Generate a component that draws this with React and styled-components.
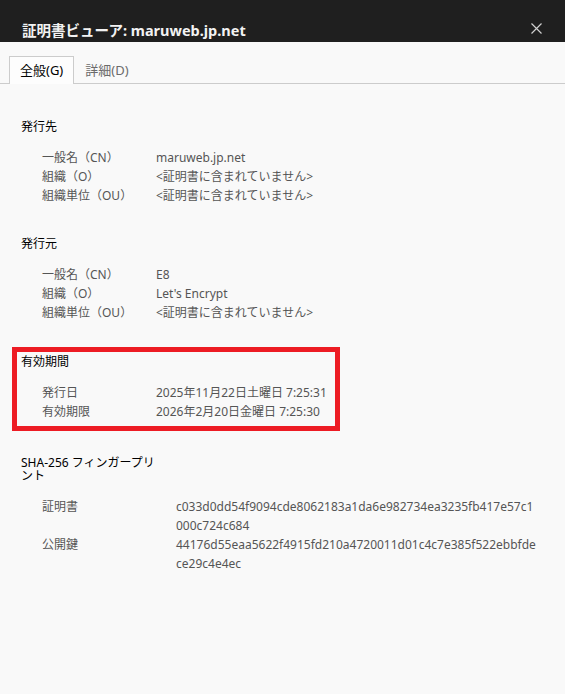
import React from "react";
import styled, { createGlobalStyle } from "styled-components";

const GlobalStyle = createGlobalStyle`
  body {
    margin: 0;
    background: #f9f9f9;
    font-family: "Noto Sans", "Noto Sans CJK JP", sans-serif;
  }
`;

const Window = styled.div`
  width: 565px;
  height: 694px;
  display: flex;
  flex-direction: column;
  background: #f9f9f9;
  overflow: hidden;
`;

const TitleBar = styled.div`
  height: 42px;
  box-sizing: border-box;
  background: #1f1f1f;
  display: flex;
  align-items: flex-end;
  justify-content: space-between;
  padding: 0 23px 1px 22px;
`;

const Title = styled.div`
  color: #f2f2f2;
  font-size: 14.5px;
  font-weight: 700;
  line-height: 22px;
`;

const CloseButton = styled.button`
  background: none;
  border: none;
  padding: 0;
  width: 12px;
  height: 12px;
  margin-bottom: 7px;
  display: flex;
  align-items: center;
  justify-content: center;
  cursor: pointer;
`;

const TabStrip = styled.div`
  display: flex;
  margin-top: 14px;
  padding-left: 9px;
  border-bottom: 1px solid #cccccc;
`;

const Tab = styled.div`
  height: 28px;
  box-sizing: border-box;
  padding: 0 10px 3px;
  display: flex;
  align-items: center;
  font-size: 13px;
  margin-bottom: -1px;
  border: 1px solid ${(p) => (p.active ? "#cccccc" : "transparent")};
  border-bottom: none;
  background: ${(p) => (p.active ? "#fdfdfd" : "transparent")};
  color: ${(p) => (p.active ? "#000000" : "#6b6b6b")};
`;

const Content = styled.div`
  display: flex;
  flex-direction: column;
  gap: 32px;
  padding: 36px 0 0 12px;
`;

const Section = styled.section`
  display: flex;
  flex-direction: column;
  box-sizing: border-box;
  padding: ${(p) => (p.highlighted ? "3px 0 5px 4px" : "0 0 0 9px")};
  border: ${(p) => (p.highlighted ? "5px solid #ed1c24" : "none")};
  width: ${(p) => (p.highlighted ? "328px" : "auto")};
  margin: ${(p) => (p.highlighted ? "-7px 0 -7px 0" : "0")};
`;

const Heading = styled.h3`
  margin: 0 0 15px;
  font-size: 12px;
  font-weight: 400;
  line-height: 13px;
  color: #000000;
  max-width: 145px;
`;

const Fields = styled.div`
  display: grid;
  grid-template-columns: ${(p) => p.labelWidth}px 1fr;
  padding-left: 21px;
  font-size: 12px;
  line-height: 19px;
  color: #555555;
`;

const Label = styled.div``;

const Value = styled.div`
  display: flex;
  flex-direction: column;
`;

const sections = [
  {
    title: "発行先",
    labelWidth: 114,
    rows: [
      ["一般名（CN）", ["maruweb.jp.net"]],
      ["組織（O）", ["<証明書に含まれていません>"]],
      ["組織単位（OU）", ["<証明書に含まれていません>"]],
    ],
  },
  {
    title: "発行元",
    labelWidth: 114,
    rows: [
      ["一般名（CN）", ["E8"]],
      ["組織（O）", ["Let's Encrypt"]],
      ["組織単位（OU）", ["<証明書に含まれていません>"]],
    ],
  },
  {
    title: "有効期間",
    labelWidth: 114,
    highlighted: true,
    rows: [
      ["発行日", ["2025年11月22日土曜日 7:25:31"]],
      ["有効期限", ["2026年2月20日金曜日 7:25:30"]],
    ],
  },
  {
    title: "SHA-256 フィンガープリント",
    labelWidth: 134,
    rows: [
      ["証明書", ["c033d0dd54f9094cde8062183a1da6e982734ea3235fb417e57c1", "000c724c684"]],
      ["公開鍵", ["44176d55eaa5622f4915fd210a4720011d01c4c7e385f522ebbfde", "ce29c4e4ec"]],
    ],
  },
];

const App = () => {
  return (
    <Window>
      <GlobalStyle />
      <TitleBar>
        <Title>証明書ビューア: maruweb.jp.net</Title>
        <CloseButton aria-label="閉じる">
          <svg width="11" height="11" viewBox="0 0 11 11">
            <path d="M0.5 0.5 L10.5 10.5 M10.5 0.5 L0.5 10.5" stroke="#d0d0d0" strokeWidth="1.2" />
          </svg>
        </CloseButton>
      </TitleBar>
      <TabStrip>
        <Tab active>全般(G)</Tab>
        <Tab>詳細(D)</Tab>
      </TabStrip>
      <Content>
        {sections.map((s) => (
          <Section key={s.title} highlighted={s.highlighted}>
            <Heading>{s.title}</Heading>
            <Fields labelWidth={s.labelWidth}>
              {s.rows.map(([label, lines]) => (
                <React.Fragment key={label}>
                  <Label>{label}</Label>
                  <Value>
                    {lines.map((line) => (
                      <span key={line}>{line}</span>
                    ))}
                  </Value>
                </React.Fragment>
              ))}
            </Fields>
          </Section>
        ))}
      </Content>
    </Window>
  );
};

export default App;
